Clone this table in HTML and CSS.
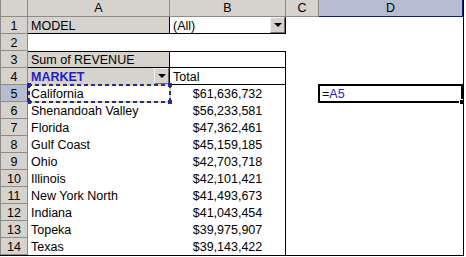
FILE: index.html
```html
<!DOCTYPE html>
<html>
<head>
<meta charset="utf-8">
<link rel="stylesheet" href="styles.css">
</head>
<body>
<div class="sheet">
  <div class="grid">
    <div class="ch corner"></div>
    <div class="ch">A</div>
    <div class="ch">B</div>
    <div class="ch">C</div>
    <div class="ch ch-sel">D</div>

    <div class="rh">1</div>
    <div class="c field">MODEL</div>
    <div class="c pv pv-top">(All)<span class="dd"><span class="tri"></span></span></div>
    <div class="c"></div>
    <div class="c"></div>

    <div class="rh">2</div>
    <div class="c"></div>
    <div class="c"></div>
    <div class="c"></div>
    <div class="c"></div>

    <div class="rh">3</div>
    <div class="c field field-top">Sum of REVENUE</div>
    <div class="c pv pv-top"></div>
    <div class="c"></div>
    <div class="c"></div>

    <div class="rh">4</div>
    <div class="c field rowfield">MARKET<span class="dd"><span class="tri"></span></span></div>
    <div class="c pv">Total</div>
    <div class="c"></div>
    <div class="c"></div>

    <div class="rh rh-sel">5</div>
    <div class="c item">California<span class="ants"><i class="h tl"></i><i class="h tr"></i><i class="h bl"></i><i class="h br"></i></span></div>
    <div class="c pv num">$61,636,732</div>
    <div class="c"></div>
    <div class="c active"><span class="eq">=</span><span class="ref">A5</span><span class="cursor"></span><span class="handle"></span></div>

    <div class="rh">6</div>
    <div class="c item">Shenandoah Valley</div>
    <div class="c pv num">$56,233,581</div>
    <div class="c"></div>
    <div class="c"></div>

    <div class="rh">7</div>
    <div class="c item">Florida</div>
    <div class="c pv num">$47,362,461</div>
    <div class="c"></div>
    <div class="c"></div>

    <div class="rh">8</div>
    <div class="c item">Gulf Coast</div>
    <div class="c pv num">$45,159,185</div>
    <div class="c"></div>
    <div class="c"></div>

    <div class="rh">9</div>
    <div class="c item">Ohio</div>
    <div class="c pv num">$42,703,718</div>
    <div class="c"></div>
    <div class="c"></div>

    <div class="rh">10</div>
    <div class="c item">Illinois</div>
    <div class="c pv num">$42,101,421</div>
    <div class="c"></div>
    <div class="c"></div>

    <div class="rh">11</div>
    <div class="c item">New York North</div>
    <div class="c pv num">$41,493,673</div>
    <div class="c"></div>
    <div class="c"></div>

    <div class="rh">12</div>
    <div class="c item">Indiana</div>
    <div class="c pv num">$41,043,454</div>
    <div class="c"></div>
    <div class="c"></div>

    <div class="rh">13</div>
    <div class="c item">Topeka</div>
    <div class="c pv num">$39,975,907</div>
    <div class="c"></div>
    <div class="c"></div>

    <div class="rh">14</div>
    <div class="c item">Texas</div>
    <div class="c pv num">$39,143,422</div>
    <div class="c"></div>
    <div class="c"></div>
  </div>
</div>
</body>
</html>
```

FILE: styles.css
```css
html, body {
  margin: 0;
  padding: 0;
  background: #ffffff;
}

body {
  width: 466px;
  height: 257px;
  overflow: hidden;
  font-family: "Liberation Sans", Arial, sans-serif;
  font-size: 12.5px;
  color: #000;
}

.sheet {
  width: 463px;
  height: 255px;
  border-right: 1px solid #000;
  border-bottom: 1px solid #000;
  overflow: hidden;
}

.grid {
  display: grid;
  grid-template-columns: 28px 142px 116px 33px 144px;
  grid-template-rows: repeat(15, 17px);
}

.grid > div {
  box-sizing: border-box;
  line-height: 17px;
  white-space: nowrap;
  position: relative;
}

.ch {
  background: #d6d3ce;
  border-right: 1px solid #8e8c88;
  border-bottom: 1px solid #8e8c88;
  text-align: center;
  line-height: 16px !important;
}

.ch.corner {
  border-left: 1px solid #8e8c88;
}

.ch-sel {
  background: #b6bdd2;
  border-right: 1px solid #0a246a;
  border-bottom: 1px solid #0a246a;
}

.rh {
  background: #d6d3ce;
  border-right: 1px solid #8e8c88;
  border-bottom: 1px solid #8e8c88;
  border-left: 1px solid #8e8c88;
  text-align: center;
  padding-top: 1px;
  line-height: 16px !important;
}

.rh-sel {
  background: #b6bdd2;
  border-right: 1px solid #0a246a;
}

.c {
  padding-left: 3px;
  padding-top: 1px;
  line-height: 16px !important;
}

.field {
  background: #d6d3ce;
  border-right: 1px solid #000;
  border-bottom: 1px solid #000;
}

.field-top {
  border-top: 1px solid #000;
  padding-top: 0;
}

.rowfield {
  color: #1c1ccc;
  font-weight: bold;
}

.pv {
  border-right: 1px solid #000;
}

.pv-top {
  border-bottom: 1px solid #000;
}

.field-top + .pv-top {
  border-top: 1px solid #000;
  padding-top: 0;
}

.rowfield + .pv {
  border-bottom: 1px solid #000;
}

.num {
  text-align: center;
  padding-left: 0;
}

.dd {
  position: absolute;
  right: 0;
  top: 0;
  bottom: 0;
  width: 15px;
  box-sizing: border-box;
  background: #d6d3ce;
  border-top: 1px solid #f2f1ef;
  border-left: 1px solid #f2f1ef;
  border-right: 1px solid #6f6d69;
  border-bottom: 1px solid #6f6d69;
  display: flex;
  align-items: center;
  justify-content: center;
}

.tri {
  width: 0;
  height: 0;
  border-left: 4px solid transparent;
  border-right: 4px solid transparent;
  border-top: 4px solid #000;
}

.item {
  padding-left: 3px;
}

.ants {
  position: absolute;
  left: 0;
  top: -1px;
  right: -1px;
  bottom: -1px;
  background:
    repeating-linear-gradient(90deg, #232b9a 0 4px, #e6e08c 4px 7px) top / 100% 2px no-repeat,
    repeating-linear-gradient(90deg, #232b9a 0 4px, #e6e08c 4px 7px) bottom / 100% 2px no-repeat,
    repeating-linear-gradient(180deg, #232b9a 0 4px, #e6e08c 4px 7px) left / 2px 100% no-repeat,
    repeating-linear-gradient(180deg, #232b9a 0 4px, #e6e08c 4px 7px) right / 2px 100% no-repeat;
}

.h {
  position: absolute;
  width: 4px;
  height: 4px;
  background: #232b9a;
}
.h.tl { left: -1px; top: -1px; }
.h.tr { right: -1px; top: -1px; }
.h.bl { left: -1px; bottom: -1px; }
.h.br { right: -1px; bottom: -1px; }

.active {
  padding-left: 3px;
}

.active::before {
  content: "";
  position: absolute;
  left: -1px;
  top: -1px;
  right: 0;
  bottom: -1px;
  border: 2px solid #000;
}

.eq { color: #000; }
.ref { color: #2222cc; }

.handle {
  position: absolute;
  right: -1px;
  bottom: -2px;
  width: 4px;
  height: 4px;
  background: #000;
  border-left: 1px solid #fff;
  border-top: 1px solid #fff;
}
```
